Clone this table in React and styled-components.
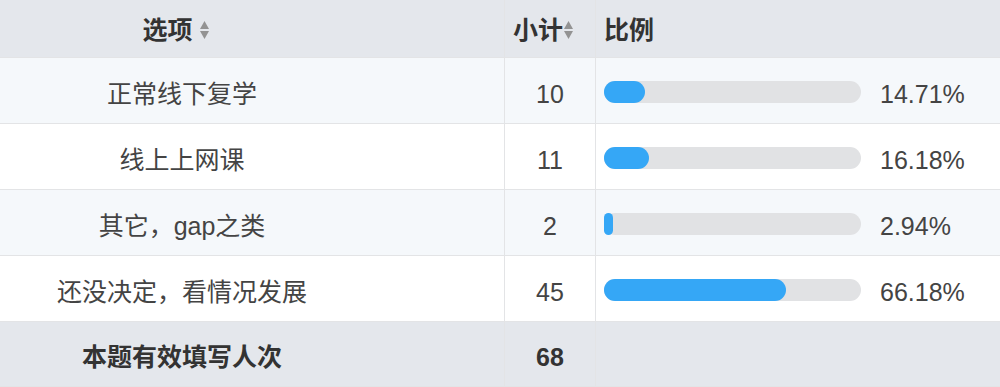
import React from "react";
import styled, { createGlobalStyle } from "styled-components";

const GlobalStyle = createGlobalStyle`
  html, body {
    margin: 0;
    padding: 0;
    background: #ffffff;
  }
  body {
    font-family: "Liberation Sans", "Noto Sans CJK SC", sans-serif;
    color: #444;
  }
`;

const rows = [
  { label: "正常线下复学", count: 10, pct: 14.71 },
  { label: "线上上网课", count: 11, pct: 16.18 },
  { label: "其它，gap之类", count: 2, pct: 2.94 },
  { label: "还没决定，看情况发展", count: 45, pct: 66.18 },
];

function SortIcon({ gap }) {
  return (
    <SortSvg $gap={gap} width="11" height="20" viewBox="0 0 11 20">
      <path d="M5.5 1 L10 9 L1 9 Z" fill="#939393" />
      <path d="M5.5 19 L10 11 L1 11 Z" fill="#939393" />
    </SortSvg>
  );
}

function App() {
  return (
    <>
      <GlobalStyle />
      <Table>
        <Row $bg="#e4e7ec" $height={58}>
          <OptionCell $head>
            选项
            <SortIcon gap={6} />
          </OptionCell>
          <CountCell $head>
            小计
            <SortIcon gap={0} />
          </CountCell>
          <RatioCell $head>比例</RatioCell>
        </Row>

        {rows.map((r, i) => (
          <Row key={r.label} $bg={i % 2 === 0 ? "#f5f8fb" : "#ffffff"} $height={66}>
            <OptionCell>{r.label}</OptionCell>
            <CountCell>{r.count}</CountCell>
            <RatioCell>
              <Track>
                <Fill style={{ width: `${Math.min(100, r.pct * 1.065 + 0.4)}%` }} />
              </Track>
              <Percent>{r.pct.toFixed(2)}%</Percent>
            </RatioCell>
          </Row>
        ))}

        <Row $bg="#e4e7ec" $height={65}>
          <OptionCell $total>本题有效填写人次</OptionCell>
          <CountCell $total>68</CountCell>
          <RatioCell />
        </Row>
      </Table>
    </>
  );
}

const Table = styled.div`
  width: 1000px;
  display: flex;
  flex-direction: column;
`;

const Row = styled.div`
  display: grid;
  grid-template-columns: 505px 91px 1fr;
  height: ${(p) => p.$height}px;
  background: ${(p) => p.$bg};
  border-bottom: 1px solid #e3e4e6;
  box-sizing: border-box;
`;

const Cell = styled.div`
  display: flex;
  align-items: center;
  box-sizing: border-box;
  border-right: 1px solid #e3e4e6;
  font-size: 25px;
  line-height: 1;
  padding-top: ${(p) => (p.$head ? 3 : 7)}px;
  font-weight: ${(p) => (p.$head || p.$total ? 700 : 400)};
  color: ${(p) => (p.$head || p.$total ? "#333" : "#444")};
`;

const OptionCell = styled(Cell)`
  justify-content: center;
  padding-right: ${(p) => (p.$head ? 152 : 140)}px;
  white-space: nowrap;
`;

const CountCell = styled(Cell)`
  justify-content: ${(p) => (p.$head ? "flex-start" : "center")};
  padding-left: ${(p) => (p.$head ? 8 : 0)}px;
`;

const RatioCell = styled(Cell)`
  border-right: none;
  padding-left: 8px;
  gap: 19px;
`;

const SortSvg = styled.svg`
  margin-left: ${(p) => p.$gap}px;
  flex-shrink: 0;
`;

const Track = styled.div`
  width: 257px;
  height: 22px;
  border-radius: 11px;
  background: #e1e2e4;
  margin-top: -5px;
`;

const Fill = styled.div`
  height: 100%;
  border-radius: 11px;
  background: #35a7f6;
`;

const Percent = styled.span`
  font-size: 25px;
  color: #444;
`;

export default App;
